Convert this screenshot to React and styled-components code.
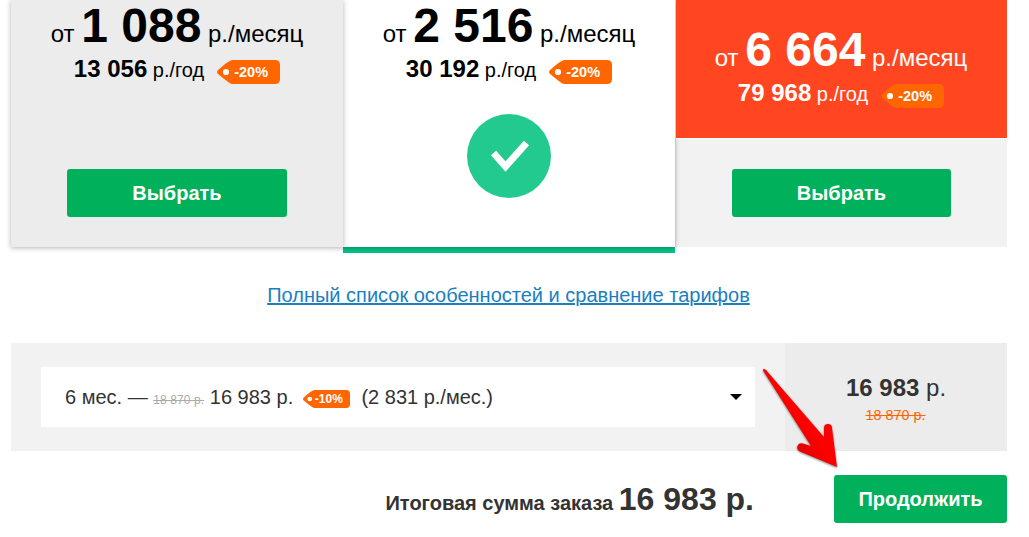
import styled, { createGlobalStyle } from "styled-components";

const GlobalStyle = createGlobalStyle`
  * {
    box-sizing: border-box;
  }
  body {
    margin: 0;
    background: #fff;
    font-family: "Liberation Sans", Arial, sans-serif;
    color: #333;
    overflow: hidden;
  }
  p {
    margin: 0;
  }
`;

const Page = styled.div`
  position: relative;
  width: 1029px;
  height: 537px;
  padding: 0 22px 0 11px;
  overflow: hidden;
`;

const Plans = styled.div`
  display: grid;
  grid-template-columns: 332px 332px 332px;
  height: 253px;
`;

const Column = styled.div`
  position: relative;
  z-index: ${({ $layer }) => $layer || "auto"};
  border-bottom: 6px solid ${({ $selected }) => ($selected ? "#00c389" : "transparent")};
`;

const Plan = styled.div`
  height: 247px;
  display: flex;
  flex-direction: column;
  align-items: center;
  background: ${({ $background }) => $background};
  box-shadow: ${({ $shadow }) => ($shadow ? "0 1px 5px rgba(0, 0, 0, 0.3)" : "none")};
  border-left: ${({ $divided }) => ($divided ? "1px solid #e6e6e6" : "none")};
  color: #000;
`;

const Prices = styled.div`
  position: relative;
  z-index: ${({ $hot }) => ($hot ? 4 : "auto")};
  width: 100%;
  height: ${({ $hot }) => ($hot ? 139 : 114)}px;
  padding-top: ${({ $hot }) => ($hot ? 26 : 2)}px;
  padding-right: ${({ $hot }) => ($hot ? 1 : 0)}px;
  background: ${({ $hot }) => ($hot ? "#ff4621" : "transparent")};
  border-bottom: ${({ $hot }) => ($hot ? "1px solid #fff" : "none")};
  color: ${({ $hot }) => ($hot ? "#fff" : "#000")};
`;

const Month = styled.p`
  display: flex;
  justify-content: center;
  align-items: baseline;
  gap: 6.67px;
  height: 54px;
  font-size: 24px;
  line-height: 48px;
  b {
    font-size: 48px;
  }
`;

const Year = styled.p`
  display: flex;
  justify-content: center;
  align-items: baseline;
  gap: 5.56px;
  font-size: 20px;
  line-height: 26px;
  b {
    font-size: 24px;
  }
`;

const TagBox = styled.span`
  position: relative;
  align-self: flex-start;
  flex: none;
  width: ${({ $small }) => ($small ? 47 : 63)}px;
  height: ${({ $small }) => ($small ? 18 : 24)}px;
  margin: ${({ $small }) => ($small ? "5px 6px 0 4px" : "4px 0 0 7.4px")};
  padding-left: ${({ $small }) => ($small ? 12 : 17)}px;
  color: #fff;
  font-size: ${({ $small }) => ($small ? 12 : 14.5)}px;
  font-weight: bold;
  line-height: ${({ $small }) => ($small ? 18 : 24)}px;
  svg {
    position: absolute;
    top: 0;
    left: 0;
    width: 100%;
    height: 100%;
  }
  span {
    position: relative;
  }
`;

const Button = styled.button`
  width: ${({ $width }) => $width}px;
  height: 48px;
  margin-top: ${({ $top }) => $top || 0}px;
  padding: 0;
  border: 0;
  border-radius: 3px;
  background: #00b05b;
  color: #fff;
  font: bold 20px "Liberation Sans", Arial, sans-serif;
`;

const Check = styled.svg`
  width: 84px;
  height: 84px;
`;

const Compare = styled.p`
  height: 90px;
  padding: 30px 1px 0 0;
  text-align: center;
  font-size: 20px;
  line-height: 24px;
  a {
    color: #1a7fc0;
    text-decoration: underline;
  }
`;

const Period = styled.div`
  display: flex;
  height: 108px;
  background: #f2f2f2;
`;

const Select = styled.div`
  display: flex;
  align-items: center;
  justify-content: space-between;
  width: 714px;
  height: 60px;
  margin: 24px 30px;
  padding: 0 13px 0 24px;
  background: #fff;
`;

const SelectText = styled.div`
  display: flex;
  align-items: baseline;
  gap: 5.6px;
  padding-top: 3px;
  font-size: 20px;
  line-height: 24px;
  s {
    color: #aaa;
    font-size: 12px;
    letter-spacing: 0.1px;
  }
`;

const Caret = styled.svg`
  width: 12px;
  height: 6px;
`;

const Sum = styled.div`
  flex: 1;
  padding: 31px 0 0;
  background: #ececec;
  text-align: center;
  font-size: 24px;
  line-height: 28px;
  s {
    display: block;
    padding-right: 1px;
    color: #ff6600;
    font-size: 14.4px;
    line-height: 26px;
  }
`;

const Footer = styled.div`
  display: flex;
  justify-content: flex-end;
  align-items: flex-start;
  gap: 80px;
  padding-top: 24px;
`;

const Total = styled.p`
  font-size: 20px;
  font-weight: bold;
  line-height: 48px;
  white-space: nowrap;
  b {
    font-size: 32px;
  }
`;

const Arrow = styled.svg`
  position: absolute;
  left: 755px;
  top: 362px;
  width: 90px;
  height: 112px;
  filter: drop-shadow(0 1px 1px rgba(0, 0, 0, 0.5));
`;

function Tag({ small, children }) {
  return (
    <TagBox $small={small}>
      <svg viewBox="0 0 63 24" preserveAspectRatio="none">
        <path
          d="M15 0H58Q63 0 63 5V19Q63 24 58 24H15Q13 24 1 14Q-1 12 1 10Q11 1 15 0Z"
          fill="#ff6600"
        />
        <circle cx="9" cy="12" r="3.1" fill="#fff" />
      </svg>
      <span>{children}</span>
    </TagBox>
  );
}

function Price({ month, year, hot }) {
  return (
    <Prices $hot={hot}>
      <Month>
        <span>от</span>
        <b>{month}</b>
        <span>р./месяц</span>
      </Month>
      <Year>
        <b>{year}</b>
        <span>р./год</span>
        <Tag>-20%</Tag>
      </Year>
    </Prices>
  );
}

function App() {
  return (
    <Page>
      <GlobalStyle />
      <Plans>
        <Column $layer={3}>
          <Plan $background="#ececec" $shadow>
            <Price month="1 088" year="13 056" />
            <Button $width={220} $top={55}>
              Выбрать
            </Button>
          </Plan>
        </Column>
        <Column $layer={2} $selected>
          <Plan $background="#fff" $shadow>
            <Price month="2 516" year="30 192" />
            <Check viewBox="0 0 84 84">
              <circle cx="42" cy="42" r="42" fill="#23ca8f" />
              <path d="M26.5 39L38.5 52.5L59.5 29" fill="none" stroke="#fff" strokeWidth="7" />
            </Check>
          </Plan>
        </Column>
        <Column>
          <Plan $background="#f2f2f2" $divided>
            <Price month="6 664" year="79 968" hot />
            <Button $width={219} $top={30}>
              Выбрать
            </Button>
          </Plan>
        </Column>
      </Plans>
      <Compare>
        <a>Полный список особенностей и сравнение тарифов</a>
      </Compare>
      <Period>
        <Select>
          <SelectText>
            <span>6 мес. —</span>
            <s>18 870 р.</s>
            <span>16 983 р.</span>
            <Tag small>-10%</Tag>
            <span>(2 831 р./мес.)</span>
          </SelectText>
          <Caret viewBox="0 0 12 6">
            <path d="M0 0H12L6 6Z" />
          </Caret>
        </Select>
        <Sum>
          <b>16 983</b> р.
          <s>18 870 р.</s>
        </Sum>
      </Period>
      <Footer>
        <Total>
          Итоговая сумма заказа <b>16 983 р.</b>
        </Total>
        <Button $width={173}>Продолжить</Button>
      </Footer>
      <Arrow viewBox="0 0 90 112">
        <defs>
          <linearGradient id="arrow-red" x1="0" y1="1" x2="1" y2="0">
            <stop offset="0.3" stopColor="#dc0000" />
            <stop offset="0.5" stopColor="#ff0000" />
          </linearGradient>
        </defs>
        <path
          d="M8 8.5Q8 6 11 8L69 75V66A4 4 0 0 1 77 66L82 105L45 89.500A4 4 0 0 1 48 81.500L56 84L8 8.500Z"
          fill="url(#arrow-red)"
        />
      </Arrow>
    </Page>
  );
}

export default App;
